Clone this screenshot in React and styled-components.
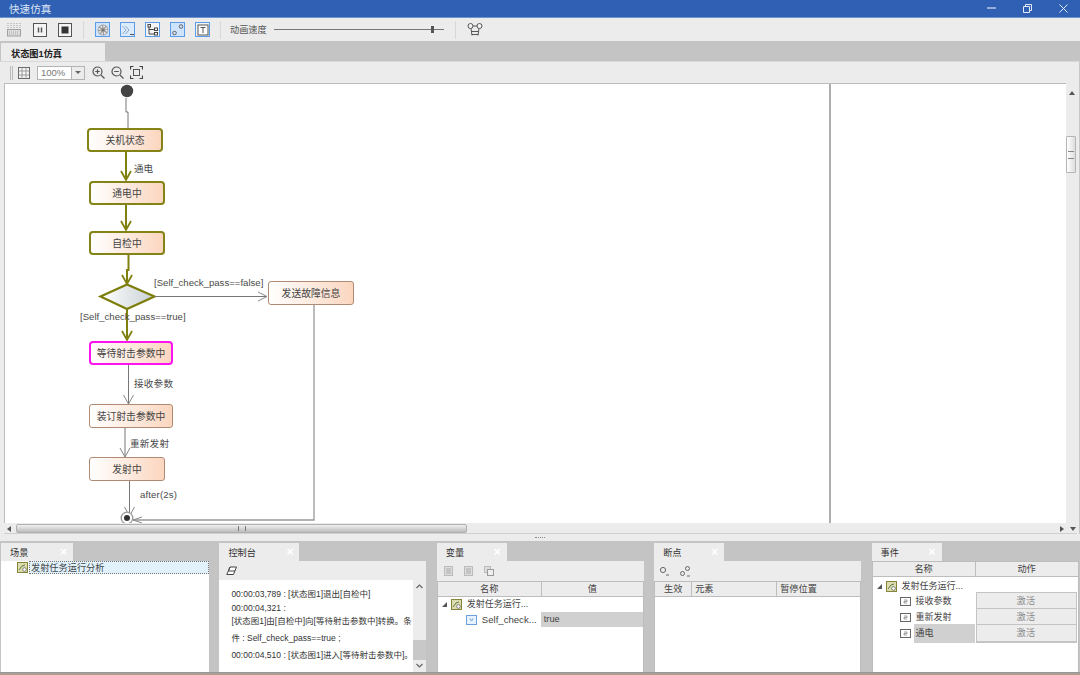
import styled, { createGlobalStyle } from "styled-components";

const Global = createGlobalStyle`
  html, body { margin: 0; padding: 0; background: #c4c4c4; }
  * { box-sizing: border-box; }
  body { font-family: "Liberation Sans", "Noto Sans CJK SC", sans-serif; font-size: 9.2px; color: #3a3a3a; }
`;

const Window = styled.div`
  width: 1080px; height: 675px; overflow: hidden;
  display: flex; flex-direction: column; background: #c4c4c4;
`;

const TitleBar = styled.div`
  height: 18px; flex: none; background: #2f60b4; border-bottom: 1px solid #6f93cf;
  display: flex; align-items: center; justify-content: space-between;
  padding: 0 12px 1px 9px; color: #dbe5f5; font-size: 10.6px;
`;
const WinButtons = styled.div`
  display: flex; align-items: center; gap: 27px;
  svg { display: block; }
`;

const Toolbar = styled.div`
  height: 23px; flex: none; background: #ececec;
  display: flex; align-items: center; padding-left: 7px;
`;
const ToolGroup = styled.div`
  display: flex; align-items: center; gap: ${p => p.$gap}px;
`;
const Sep = styled.div`
  width: 1px; height: 18px; background: #d8d8d8; margin: 0 ${p => p.$after}px 0 ${p => p.$before}px;
`;
const BlueButton = styled.div`
  width: 15px; height: 15px; border: 1.5px solid #5a9bea; background: ${p => p.$fill};
  display: flex; align-items: center; justify-content: center;
  svg { display: block; }
`;
const SpeedLabel = styled.span`
  color: #555; width: 44px; font-size: 9.2px; margin-bottom: 2px;
`;
const Slider = styled.div`
  width: 170px; height: 9px; position: relative;
  &::before { content: ""; position: absolute; left: 0; right: 0; top: 4px; height: 1px; background: #777; }
`;
const SliderThumb = styled.div`
  position: absolute; left: 157px; top: 1px; width: 3px; height: 7px; background: #555;
`;

const TabStrip = styled.div`
  height: 20px; flex: none; background: #c4c4c4; padding: 2px 0 0 1px;
  display: flex;
`;
const DocTab = styled.div`
  width: 104px; background: #ececec; padding-left: 10px; padding-top: 3px;
  font-weight: 700; font-size: 9.2px; color: #222;
`;

const DocPanel = styled.div`
  flex: none; height: 473px; background: #ececec; display: flex; flex-direction: column;
  padding: 0 2px 0 4px; border-right: 1px solid #c8c8c8; border-top: 1px solid #d8d8d8;
`;
const DiagramBar = styled.div`
  height: 21px; flex: none; display: flex; align-items: center; padding-left: 6px;
  svg { display: block; }
`;
const Grip = styled.div`
  width: 3px; height: 14px; border-left: 1px solid #bbb; border-right: 1px solid #bbb; margin-right: 5px;
`;
const Combo = styled.div`
  width: 48px; height: 14px; margin: 0 7px 0 7px; display: flex;
  border: 1px solid #b4b4b4; background: #fff;
`;
const ComboValue = styled.div`
  flex: 1; color: #777; font-size: 9.5px; line-height: 12px; padding-left: 3px;
`;
const ComboArrow = styled.div`
  width: 13px; background: #ececec; border-left: 1px solid #b4b4b4;
  display: flex; align-items: center; justify-content: center;
  &::after { content: ""; border: 3px solid transparent; border-top: 3px solid #666; margin-top: 3px; }
`;
const ZoomIcons = styled.div`
  display: flex; align-items: center; gap: 6px;
`;

const CanvasRow = styled.div`
  flex: 1; min-height: 0; display: flex;
`;
const Canvas = styled.div`
  flex: 1; display: flex; background: #fff; border-top: 1px solid #bcbcbc; border-left: 1px solid #bcbcbc;
  overflow: hidden;
`;
const DiagramPane = styled.div`
  width: 826px; flex: none; position: relative; border-right: 2px solid #adadad; overflow: hidden;
`;
const Edges = styled.svg`
  position: absolute; left: 0; top: 0;
`;
const StateNode = styled.div`
  position: absolute; left: ${p => p.$x - 5}px; top: ${p => p.$y - 84}px;
  width: ${p => p.$w}px; height: 24px; border-radius: ${p => p.$tone ? 4 : 3}px; padding-bottom: 1px;
  display: flex; align-items: center; justify-content: center;
  background: linear-gradient(90deg, #ffffff 0%, #fbd6bf 100%);
  border: ${p => p.$tone === "olive" ? "2.5px solid #838316" : p.$tone === "magenta" ? "2.5px solid #ff14f0" : "1px solid #b08a72"};
  color: #444; font-size: 9.8px;
`;
const EdgeLabel = styled.div`
  position: absolute; left: ${p => p.$x - 5}px; top: ${p => p.$y - 84 - 6}px;
  line-height: 14px; white-space: nowrap; color: #4a4a4a; font-size: 9.6px; letter-spacing: ${p => p.$spacing || 0}px;
`;

const VScroll = styled.div`
  width: 11px; flex: none; display: flex; flex-direction: column; align-items: center; position: relative;
`;
const ScrollThumbV = styled.div`
  position: absolute; top: 53px; left: 0; width: 10px; height: 37px; border: 1px solid #b5b5b5; border-radius: 1px;
  background: linear-gradient(90deg, #fff, #ddd);
  display: flex; align-items: center; justify-content: center;
  &::after { content: ""; width: 6px; height: 6px; border-top: 1px solid #888; border-bottom: 1px solid #888; }
`;
const ArrowUp = styled.div`
  margin-top: 5px; border: 3px solid transparent; border-bottom: 4px solid #555;
`;
const HScroll = styled.div`
  height: 11px; flex: none; display: flex; align-items: center; position: relative; background: #ececec;
  border-bottom: 1px solid #d0d0d0;
`;
const ArrowSide = styled.div`
  position: absolute; top: 3px; left: ${p => p.$x}px; border: 3px solid transparent;
  ${p => p.$dir === "left" ? "border-right: 4px solid #555; border-left: 0;" : "border-left: 4px solid #555; border-right: 0;"}
`;
const ArrowDownSmall = styled.div`
  position: absolute; top: 4px; left: ${p => p.$x}px; border: 3px solid transparent; border-top: 4px solid #555;
`;
const ScrollThumbH = styled.div`
  position: absolute; left: 12px; top: 1px; width: 451px; height: 9px; border: 1px solid #b0b0b0; border-radius: 2px;
  background: linear-gradient(180deg, #f0f0f0, #bcbcbc);
  display: flex; align-items: center; justify-content: center;
  &::after { content: ""; width: 6px; height: 5px; border-left: 1px solid #777; border-right: 1px solid #777; }
`;

const Splitter = styled.div`
  height: 7px; flex: none; background: #ececec; display: flex; align-items: center; justify-content: center;
  &::after { content: ""; width: 10px; border-top: 1px dotted #888; }
`;

const Dock = styled.div`
  flex: 1; min-height: 0; display: grid; grid-template-columns: 208px repeat(4, 207px); column-gap: 10.4px;
  padding: 2px 0 0 1px; background: #c4c4c4;
`;
const Panel = styled.div`
  display: flex; flex-direction: column; min-height: 0;
`;
const PanelTab = styled.div`
  width: ${p => p.$w}px; height: 18px; flex: none; background: #ececec;
  display: flex; align-items: center; justify-content: space-between; padding: 0 6px 0 9px;
  color: #333; font-size: 9.2px;
`;
const TabClose = styled.span`
  color: #fff; font-size: 12px; line-height: 1; font-weight: 700;
`;
const PanelBody = styled.div`
  flex: 1; min-height: 0; display: flex; flex-direction: column; background: ${p => p.$bg || "#ececec"};
`;
const PanelTools = styled.div`
  height: ${p => p.$h || 20}px; flex: none; display: flex; align-items: center; gap: ${p => p.$gap || 11}px; padding-left: ${p => p.$pad || 7}px;
  svg { display: block; }
`;
const SceneRow = styled.div`
  display: flex; align-items: center; height: 13px; padding-left: 16px; gap: 1px;
  svg { flex: none; display: block; }
`;
const SceneLabel = styled.div`
  flex: 1; height: 13px; line-height: 13px; background: #e1f2fc; border: 1px dotted #777; padding-left: 1px; color: #444;
`;

const ConsoleWrap = styled.div`
  flex: 1; min-height: 0; display: flex; background: #fff;
`;
const ConsoleText = styled.div`
  flex: 1; min-width: 0; padding: 7px 0 0 12px; overflow: hidden; font-size: 8.5px; color: #333;
`;
const ConsoleLine = styled.div`
  height: ${p => p.$h}px; line-height: 14px; white-space: nowrap;
`;
const ConsoleScroll = styled.div`
  width: 13px; flex: none; background: #ececec; position: relative;
`;
const ConsoleThumb = styled.div`
  position: absolute; top: 60px; left: 0; right: 0; height: 20px; background: #c8c8c8;
`;
const Chevron = styled.svg`
  position: absolute; left: 3px; top: ${p => p.$top}px;
`;

const HeaderRow = styled.div`
  display: grid; grid-template-columns: ${p => p.$cols}; height: 16px; flex: none;
  background: #ececec; border: 1px solid #bdbdbd;
`;
const HeaderCell = styled.div`
  line-height: 14px; text-align: ${p => p.$left ? "left" : "center"}; padding-left: ${p => p.$left ? 3 : 0}px;
  color: #444; border-left: ${p => p.$first ? "0" : "1px solid #bdbdbd"};
`;
const TreeBody = styled.div`
  flex: 1; min-height: 0; background: #fff; border-left: 1px solid #bdbdbd; border-right: 1px solid #bdbdbd;
`;
const TreeRow = styled.div`
  display: grid; grid-template-columns: ${p => p.$cols}; height: ${p => p.$h}px;
`;
const TreeName = styled.div`
  display: flex; align-items: center; padding-left: ${p => p.$indent}px; gap: 3px; min-width: 0;
  svg { flex: none; display: block; }
`;
const Expander = styled.span`
  width: 0; height: 0; border-left: 5px solid transparent; border-bottom: 5px solid #555; margin-right: 1px;
`;
const NameText = styled.span`
  flex: 1; height: 100%; line-height: ${p => p.$lh}px; white-space: nowrap; overflow: hidden; padding-left: 2px;
  background: ${p => p.$active ? "#d0d0d0" : "#fff"}; color: #444; font-size: ${p => p.$size || 9}px;
`;
const ValueCell = styled.div`
  background: ${p => p.$active ? "#d0d0d0" : "#fff"}; padding-left: 3px; line-height: 15px; color: #444;
`;
const ActionButton = styled.div`
  margin: 0 1px; background: #ececec; border: 1px solid #c4c4c4; border-bottom-width: 2px;
  text-align: center; line-height: 16px; color: #8a8a8a; letter-spacing: 0.3px;
`;

const BottomEdge = styled.div`
  height: 3px; flex: none; background: #ad9f94; border-top: 1px solid #979797;
`;

const SceneIcon = () => (
  <svg width="11" height="11" viewBox="0 0 11 11">
    <rect x="0.5" y="0.5" width="10" height="10" fill="#dcdcae" stroke="#85853a" />
    <path d="M2 8L5 4L8 3" stroke="#5e7a4a" fill="none" />
    <circle cx="7.5" cy="7.5" r="1.8" fill="#fff" stroke="#666" strokeWidth="0.8" />
  </svg>
);
const VarIcon = () => (
  <svg width="11" height="10" viewBox="0 0 11 10">
    <rect x="0.5" y="0.5" width="10" height="9" fill="#e8f2fc" stroke="#6aa0dc" />
    <path d="M4 3.5L5.5 6L7 3.5" stroke="#6aa0dc" fill="none" />
  </svg>
);
const EventIcon = () => (
  <svg width="11" height="9" viewBox="0 0 11 9">
    <rect x="0.5" y="0.5" width="10" height="8" fill="#fff" stroke="#666" />
    <path d="M4 3H7V4.5H4V6H7" stroke="#888" strokeWidth="0.8" fill="none" />
  </svg>
);

const Ico = {
  keyboard: (
    <svg width="14" height="14" viewBox="0 0 14 14">
      <path d="M1 0v6M4 0v6M7 0v6M10 0v6M13 0v6" stroke="#a0a0a0" strokeDasharray="1 1" />
      <rect x="0.5" y="6.5" width="13" height="6.5" fill="#ddd" stroke="#a0a0a0" />
      <path d="M2 9h10M2 11h10" stroke="#aaa" strokeDasharray="1 1" />
    </svg>
  ),
  pause: (
    <svg width="14" height="14" viewBox="0 0 14 14">
      <rect x="0.5" y="0.5" width="13" height="13" fill="#f4f4f4" stroke="#555" />
      <path d="M5.5 4.5v5M8.5 4.5v5" stroke="#555" strokeWidth="1.5" />
    </svg>
  ),
  stop: (
    <svg width="14" height="14" viewBox="0 0 14 14">
      <rect x="0.5" y="0.5" width="13" height="13" fill="#f4f4f4" stroke="#555" />
      <rect x="3.5" y="3.5" width="7" height="7" fill="#333" />
    </svg>
  ),
  wheel: (
    <svg width="12" height="12" viewBox="0 0 12 12">
      <circle cx="6" cy="6" r="5.4" fill="#9a9a9a" />
      <circle cx="6" cy="6" r="3.6" fill="none" stroke="#e6e6e6" strokeDasharray="1.6 1.2" strokeWidth="2.2" />
      <circle cx="6" cy="6" r="1.2" fill="#777" />
    </svg>
  ),
  term: (
    <svg width="12" height="12" viewBox="0 0 12 12">
      <path d="M0.5 2L4 6L0.5 10M3.5 2L7 6L3.5 10" fill="none" stroke="#8aa8cc" />
      <path d="M8 10.5h4" stroke="#555" />
    </svg>
  ),
  tree: (
    <svg width="12" height="12" viewBox="0 0 12 12">
      <rect x="1" y="0.5" width="2.5" height="2.5" fill="#fff" stroke="#444" />
      <rect x="7.5" y="4" width="3" height="2.5" fill="#fff" stroke="#444" />
      <rect x="7.5" y="8.5" width="3" height="2.5" fill="#fff" stroke="#444" />
      <path d="M2 3v7h5.5M2 5.5h5.5" fill="none" stroke="#444" />
    </svg>
  ),
  nodes: (
    <svg width="12" height="12" viewBox="0 0 12 12">
      <circle cx="2.5" cy="9" r="1.8" fill="none" stroke="#666" />
      <circle cx="9" cy="2.5" r="1.8" fill="none" stroke="#666" />
    </svg>
  ),
  text: (
    <svg width="12" height="12" viewBox="0 0 12 12">
      <rect x="1" y="1" width="10" height="10" fill="#fff" stroke="#555" />
      <path d="M3.5 3.5h5M6 3.5v5.5" stroke="#555" fill="none" />
    </svg>
  ),
  film: (
    <svg width="16" height="13" viewBox="0 0 16 13">
      <circle cx="3.5" cy="3" r="2.5" fill="#f4f4f4" stroke="#555" />
      <circle cx="12.5" cy="3" r="2.5" fill="#f4f4f4" stroke="#555" />
      <path d="M6 3h4M4 5.5L5 12.5M12 5.5L11 12.5M4.5 8.5h7M5 11.5h6" fill="none" stroke="#555" />
    </svg>
  ),
  grid: (
    <svg width="12" height="12" viewBox="0 0 12 12">
      <rect x="0.5" y="0.5" width="11" height="11" fill="#f6f6f6" stroke="#666" />
      <path d="M4 0.5v11M8 0.5v11M0.5 4h11M0.5 8h11" stroke="#999" />
    </svg>
  ),
  zoomIn: (
    <svg width="13" height="13" viewBox="0 0 13 13">
      <circle cx="5.5" cy="5.5" r="4.5" fill="none" stroke="#555" strokeWidth="1.2" />
      <path d="M3.2 5.5h4.6M5.5 3.2v4.6M9 9l3.5 3.5" stroke="#555" strokeWidth="1.2" />
    </svg>
  ),
  zoomOut: (
    <svg width="13" height="13" viewBox="0 0 13 13">
      <circle cx="5.5" cy="5.5" r="4.5" fill="none" stroke="#555" strokeWidth="1.2" />
      <path d="M3.2 5.5h4.6M9 9l3.5 3.5" stroke="#555" strokeWidth="1.2" />
    </svg>
  ),
  fit: (
    <svg width="13" height="13" viewBox="0 0 13 13">
      <path d="M0.5 3.5v-3h3M9.5 0.5h3v3M12.5 9.5v3h-3M3.5 12.5h-3v-3" fill="none" stroke="#444" strokeWidth="1.2" />
      <rect x="3.5" y="3.5" width="6" height="6" fill="none" stroke="#555" />
    </svg>
  ),
  eraser: (
    <svg width="11" height="10" viewBox="0 0 11 10">
      <path d="M4 1h6.5L7.5 8.5H0.8Z" fill="#fff" stroke="#444" />
      <path d="M4 1L2.5 5H9" fill="none" stroke="#444" />
    </svg>
  ),
  varA: (
    <svg width="9" height="10" viewBox="0 0 9 10">
      <rect x="0.5" y="0.5" width="8" height="9" fill="#ddd" stroke="#bbb" />
      <path d="M2 3h5M2 5h5M2 7h5" stroke="#aaa" />
    </svg>
  ),
  varC: (
    <svg width="10" height="10" viewBox="0 0 10 10">
      <rect x="0.5" y="0.5" width="6" height="6" fill="#ddd" stroke="#bbb" />
      <rect x="3.5" y="3.5" width="6" height="6" fill="#eee" stroke="#999" />
    </svg>
  ),
  bpA: (
    <svg width="9" height="10" viewBox="0 0 9 10">
      <circle cx="3" cy="4" r="2.6" fill="none" stroke="#666" />
      <path d="M6 9h3" stroke="#666" />
    </svg>
  ),
  bpB: (
    <svg width="11" height="11" viewBox="0 0 11 11">
      <circle cx="2.5" cy="7.5" r="2" fill="none" stroke="#666" />
      <circle cx="7.5" cy="2.5" r="2" fill="none" stroke="#666" />
      <path d="M7 10h3" stroke="#666" />
    </svg>
  ),
};

const nodes = [
  { text: "关机状态", x: 87, y: 128, w: 76, tone: "olive" },
  { text: "通电中", x: 89, y: 181, w: 76, tone: "olive" },
  { text: "自检中", x: 89, y: 231, w: 76, tone: "olive" },
  { text: "发送故障信息", x: 268, y: 281, w: 86 },
  { text: "等待射击参数中", x: 89, y: 341, w: 84, tone: "magenta" },
  { text: "装订射击参数中", x: 89, y: 404, w: 84 },
  { text: "发射中", x: 89, y: 457, w: 76 },
];

const labels = [
  { text: "通电", x: 134, y: 168 },
  { text: "[Self_check_pass==false]", x: 154, y: 282 },
  { text: "[Self_check_pass==true]", x: 80, y: 316 },
  { text: "接收参数", x: 134, y: 383, s: 0.2 },
  { text: "重新发射", x: 130, y: 443, s: 0.2 },
  { text: "after(2s)", x: 140, y: 494, s: 0.15 },
];

const oliveEdges = [
  [126, 152, 126, 180],
  [126, 205, 126, 230],
  [127, 309, 127, 340],
];

const grayEdges = [
  [128.5, 365, 128.5, 404],
  [125, 428, 125, 457],
  [129.5, 481, 129.5, 516],
];

const DownHead = ({ x, y, color, w }) => (
  <path d={`M${x - 5} ${y - 9}L${x} ${y}L${x + 5} ${y - 9}`} fill="none" stroke={color} strokeWidth={w} />
);

const Diagram = () => (
  <Edges width="825" height="439" viewBox="5 84 825 439">
    <defs>
      <linearGradient id="dia" x1="0" x2="1" y1="0" y2="0">
        <stop offset="0" stopColor="#ffffff" />
        <stop offset="1" stopColor="#c9d1d6" />
      </linearGradient>
    </defs>
    <circle cx="127" cy="91" r="6.2" fill="#444" />
    <path d="M126 98V112H128V128" fill="none" stroke="#777" strokeWidth="1" />
    {oliveEdges.map(([x1, y1, x2, y2]) => (
      <g key={y1}>
        <path d={`M${x1} ${y1}L${x2} ${y2}`} stroke="#80800f" strokeWidth="2" />
        <DownHead x={x2} y={y2} color="#80800f" w="1.8" />
      </g>
    ))}
    <path d="M128.5 255V270H127V284" fill="none" stroke="#80800f" strokeWidth="2" />
    <DownHead x={127} y={284} color="#80800f" w="1.8" />
    <polygon points="100.5,296.5 127,284.5 154.5,296.5 127,309" fill="url(#dia)" stroke="#7d7d0a" strokeWidth="2.2" />
    <path d="M155 296.5H267" stroke="#777" />
    <path d="M258 292L267 296.5L258 301" fill="none" stroke="#888" />
    {grayEdges.map(([x1, y1, x2, y2]) => (
      <g key={y1}>
        <path d={`M${x1} ${y1}L${x2} ${y2}`} stroke="#777" />
        <DownHead x={x2} y={y2} color="#888" w="1" />
      </g>
    ))}
    <path d="M314 305V520H133" fill="none" stroke="#999" strokeWidth="1.3" />
    <path d="M142 517L133 520L142 523" fill="none" stroke="#888" />
    <circle cx="127" cy="518" r="5.8" fill="#fff" stroke="#999" strokeWidth="1.3" />
    <circle cx="127" cy="518" r="3" fill="#333" />
  </Edges>
);

const NameCols = "103px 1fr";
const EventCols = "102px 1fr";

export default function App() {
  return (
    <Window>
      <Global />
      <TitleBar>
        <span>快速仿真</span>
        <WinButtons>
          <svg width="9" height="2" viewBox="0 0 9 2"><path d="M0 1h9" stroke="#fff" /></svg>
          <svg width="9" height="9" viewBox="0 0 9 9"><path d="M0.5 2.5h6v6h-6zM2.5 2.5v-2h6v6h-2" fill="none" stroke="#e4ecf8" /></svg>
          <svg width="9" height="9" viewBox="0 0 9 9"><path d="M0.5 0.5l8 8M8.5 0.5l-8 8" stroke="#e4ecf8" /></svg>
        </WinButtons>
      </TitleBar>

      <Toolbar>
        <ToolGroup $gap={11.5}>{Ico.keyboard}{Ico.pause}{Ico.stop}</ToolGroup>
        <Sep $before={11} $after={11} />
        <ToolGroup $gap={10}>
          <BlueButton $fill="#cfe3fb">{Ico.wheel}</BlueButton>
          <BlueButton $fill="#dcebfc">{Ico.term}</BlueButton>
          <BlueButton $fill="#f4f4f4">{Ico.tree}</BlueButton>
          <BlueButton $fill="#cfe3fb">{Ico.nodes}</BlueButton>
          <BlueButton $fill="#f4f4f4">{Ico.text}</BlueButton>
        </ToolGroup>
        <Sep $before={10} $after={9} />
        <SpeedLabel>动画速度</SpeedLabel>
        <Slider><SliderThumb /></Slider>
        <Sep $before={11} $after={11} />
        {Ico.film}
      </Toolbar>

      <TabStrip><DocTab>状态图1仿真</DocTab></TabStrip>

      <DocPanel>
        <DiagramBar>
          <Grip />
          {Ico.grid}
          <Combo><ComboValue>100%</ComboValue><ComboArrow /></Combo>
          <ZoomIcons>{Ico.zoomIn}{Ico.zoomOut}{Ico.fit}</ZoomIcons>
        </DiagramBar>
        <CanvasRow>
          <Canvas>
            <DiagramPane>
              <Diagram />
              {nodes.map(n => (
                <StateNode key={n.text} $x={n.x} $y={n.y} $w={n.w} $tone={n.tone}>{n.text}</StateNode>
              ))}
              {labels.map(l => (
                <EdgeLabel key={l.text} $x={l.x} $y={l.y} $spacing={l.s}>{l.text}</EdgeLabel>
              ))}
            </DiagramPane>
          </Canvas>
          <VScroll>
            <ArrowUp />
            <ScrollThumbV />
          </VScroll>
        </CanvasRow>
        <HScroll>
          <ArrowSide $x={3} $dir="left" />
          <ScrollThumbH />
          <ArrowSide $x={1056} $dir="right" />
          <ArrowDownSmall $x={1066} />
        </HScroll>
      </DocPanel>

      <Splitter />

      <Dock>
        <Panel>
          <PanelTab $w={72}>场景<TabClose>×</TabClose></PanelTab>
          <PanelBody $bg="#fff">
            <SceneRow><SceneIcon /><SceneLabel>发射任务运行分析</SceneLabel></SceneRow>
          </PanelBody>
        </Panel>

        <Panel>
          <PanelTab $w={80}>控制台<TabClose>×</TabClose></PanelTab>
          <PanelBody>
            <PanelTools $h={19}>{Ico.eraser}</PanelTools>
            <ConsoleWrap>
              <ConsoleText>
                <ConsoleLine $h={14}>00:00:03,789 : [状态图1]退出[自检中]</ConsoleLine>
                <ConsoleLine $h={13}>00:00:04,321 :</ConsoleLine>
                <ConsoleLine $h={17}>[状态图1]由[自检中]向[等待射击参数中]转换。条</ConsoleLine>
                <ConsoleLine $h={17}>件 : Self_check_pass==true ;</ConsoleLine>
                <ConsoleLine $h={14}>00:00:04,510 : [状态图1]进入[等待射击参数中]。</ConsoleLine>
              </ConsoleText>
              <ConsoleScroll>
                <Chevron $top={4} width="7" height="5" viewBox="0 0 7 5"><path d="M0.5 4L3.5 1L6.5 4" fill="none" stroke="#666" strokeWidth="1.2" /></Chevron>
                <ConsoleThumb />
                <Chevron $top={83} width="7" height="5" viewBox="0 0 7 5"><path d="M0.5 1L3.5 4L6.5 1" fill="none" stroke="#666" strokeWidth="1.2" /></Chevron>
              </ConsoleScroll>
            </ConsoleWrap>
          </PanelBody>
        </Panel>

        <Panel>
          <PanelTab $w={70}>变量<TabClose>×</TabClose></PanelTab>
          <PanelBody>
            <PanelTools>{Ico.varA}{Ico.varA}{Ico.varC}</PanelTools>
            <HeaderRow $cols={NameCols}>
              <HeaderCell $first>名称</HeaderCell>
              <HeaderCell>值</HeaderCell>
            </HeaderRow>
            <TreeBody>
              <TreeRow $cols={NameCols} $h={15}>
                <TreeName $indent={4}><Expander /><SceneIcon /><NameText $lh={15}>发射任务运行...</NameText></TreeName>
                <ValueCell />
              </TreeRow>
              <TreeRow $cols={NameCols} $h={15}>
                <TreeName $indent={28}><VarIcon /><NameText $lh={15} $size={9.6}>Self_check...</NameText></TreeName>
                <ValueCell $active>true</ValueCell>
              </TreeRow>
            </TreeBody>
          </PanelBody>
        </Panel>

        <Panel>
          <PanelTab $w={70}>断点<TabClose>×</TabClose></PanelTab>
          <PanelBody>
            <PanelTools $pad={6}>{Ico.bpA}{Ico.bpB}</PanelTools>
            <HeaderRow $cols="36px 85px 1fr">
              <HeaderCell $first>生效</HeaderCell>
              <HeaderCell $left>元素</HeaderCell>
              <HeaderCell $left>暂停位置</HeaderCell>
            </HeaderRow>
            <TreeBody />
          </PanelBody>
        </Panel>

        <Panel>
          <PanelTab $w={70}>事件<TabClose>×</TabClose></PanelTab>
          <PanelBody>
            <HeaderRow $cols={EventCols}>
              <HeaderCell $first>名称</HeaderCell>
              <HeaderCell>动作</HeaderCell>
            </HeaderRow>
            <TreeBody>
              <TreeRow $cols={EventCols} $h={15}>
                <TreeName $indent={4}><Expander /><SceneIcon /><NameText $lh={18}>发射任务运行...</NameText></TreeName>
                <ValueCell />
              </TreeRow>
              {["接收参数", "重新发射", "通电"].map((name, i) => (
                <TreeRow key={name} $cols={EventCols} $h={16}>
                  <TreeName $indent={27}><EventIcon /><NameText $lh={19} $active={i === 2}>{name}</NameText></TreeName>
                  <ActionButton>激活</ActionButton>
                </TreeRow>
              ))}
            </TreeBody>
          </PanelBody>
        </Panel>
      </Dock>
      <BottomEdge />
    </Window>
  );
}
